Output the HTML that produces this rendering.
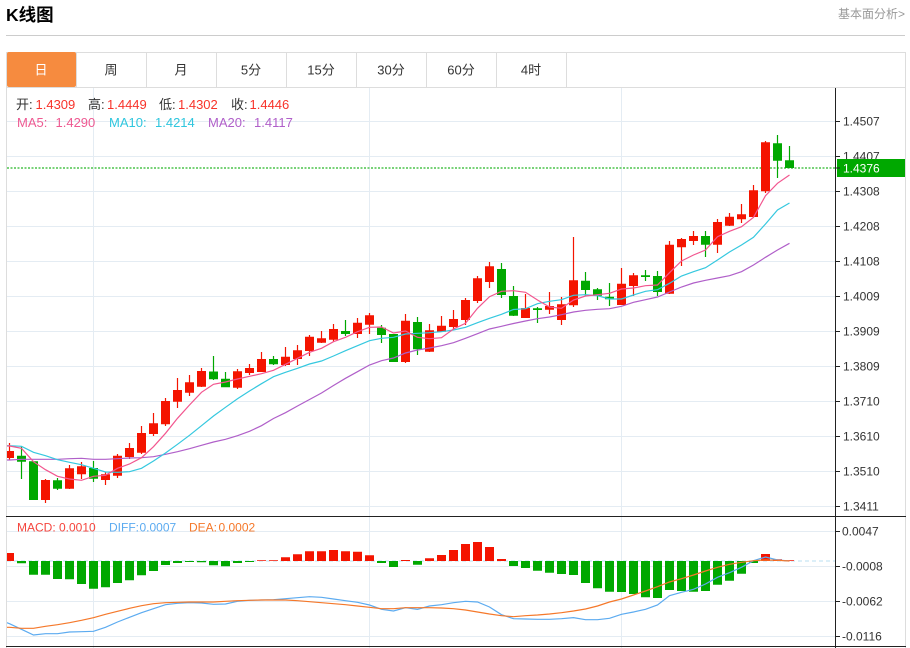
<!DOCTYPE html>
<html><head><meta charset="utf-8"><style>
html,body{margin:0;padding:0;background:#fff;width:910px;height:648px;overflow:hidden}
svg{position:absolute;left:0;top:0;display:block}
text{font-family:"Liberation Sans","Noto Sans CJK SC",sans-serif}
</style></head><body>
<svg width="910" height="648" viewBox="0 0 910 648" xmlns="http://www.w3.org/2000/svg">
<defs><clipPath id="c"><rect x="7" y="88" width="828" height="560"/></clipPath></defs>
<text x="6" y="21" font-size="17.500" font-weight="bold" fill="#000">K线图</text>
<text x="838" y="18" font-size="12" fill="#999" textLength="67">基本面分析&gt;</text>
<path d="M6 35.500H905" stroke="#ccc" fill="none"/>
<path d="M6.500 52V648M905.500 52V648M6 52.500H906M6 87.500H906" stroke="#ddd" fill="none"/>
<rect x="7" y="52" width="69" height="35" rx="2" fill="#f68b3f"/>
<path d="M76.500 52V87M146.500 52V87M216.500 52V87M286.500 52V87M356.500 52V87M426.500 52V87M496.500 52V87M566.500 52V87" stroke="#ddd" fill="none"/>
<g font-size="13" fill="#333" text-anchor="middle">
<text x="41" y="74.500" fill="#fff">日</text><text x="111" y="74.500">周</text><text x="181" y="74.500">月</text><text x="251" y="74.500">5分</text><text x="321" y="74.500">15分</text><text x="391" y="74.500">30分</text><text x="461" y="74.500">60分</text><text x="531" y="74.500">4时</text>
</g>
<path d="M7 121.500H835M7 156.500H835M7 191.500H835M7 226.500H835M7 261.500H835M7 296.500H835M7 331.500H835M7 366.500H835M7 401.500H835M7 436.500H835M7 471.500H835M7 506.500H835M7 531.500H835M7 566.500H835M7 601.500H835M7 636.500H835M93.500 88V648M369.500 88V648M621.500 88V648" stroke="#e4ecf3" fill="none"/>
<path d="M7 561H835" stroke="#b9dff2" stroke-dasharray="4 3" fill="none"/>
<path d="M7 168H835" stroke="#4cc44c" stroke-width="1.600" stroke-dasharray="2 1.500" fill="none"/>
<g clip-path="url(#c)">
<path fill="none" stroke="#f41400" stroke-width="1.200" d="M9.500 443V460M45.500 479V503M69.500 465V489M81.500 462V479M105.500 472V485M117.500 454V478M129.500 443V459M141.500 426V454M153.500 413V436M165.500 398V426M177.500 378V408M189.500 375V396M201.500 368V387M237.500 369V389M249.500 364V375M261.500 352V372M285.500 347V366M297.500 345V365M309.500 335V356M321.500 331V343M333.500 324V342M357.500 318V338M369.500 313V334M405.500 314V363M429.500 324V352M441.500 316V332M453.500 310V329M465.500 298V325M477.500 276V303M489.500 262V288M525.500 294V318M549.500 292V314M561.500 297V325M573.500 237V307M621.500 268V305M633.500 273V296M669.500 241V294M681.500 238V266M693.500 231V245M717.500 219V253M729.500 213V226M741.500 204V223M753.500 185V217M765.500 141V193"/>
<path fill="none" stroke="#00a800" stroke-width="1.200" d="M21.500 446V479M57.500 478V490M93.500 461V482M213.500 356V380M225.500 372V387M273.500 356V365M345.500 320V336M381.500 325V343M417.500 317V355M501.500 263V298M513.500 286V316M537.500 307V323M585.500 272V296M597.500 288V300M609.500 283V306M645.500 270V281M657.500 271V296M705.500 231V257M777.500 135V178M789.500 146V168"/>
<path fill="#f41400" d="M5 451h9v7h-9zM41 480h9v20h-9zM65 468.300h9v20.400h-9zM77 466.300h9v8h-9zM101 474.300h9v5.700h-9zM113 455.700h9v20h-9zM125 448h9v9h-9zM137 433h9v19.700h-9zM149 423.300h9v10.700h-9zM161 401h9v23.300h-9zM173 390h9v11.700h-9zM185 382.300h9v10.400h-9zM197 371h9v15.700h-9zM233 371.300h9v16.400h-9zM245 368h9v5h-9zM257 359h9v13h-9zM281 356.700h9v8.300h-9zM293 350.300h9v8.700h-9zM305 336.700h9v14.300h-9zM317 338.300h9v4.400h-9zM329 329h9v10.700h-9zM353 322.700h9v11.300h-9zM365 315.300h9v9.400h-9zM401 320.700h9v41.300h-9zM425 330.300h9v21.400h-9zM437 325.700h9v6h-9zM449 319h9v8h-9zM461 300h9v20h-9zM473 278.300h9v22.700h-9zM485 266.300h9v15.700h-9zM521 308h9v10h-9zM545 306h9v3.700h-9zM557 304.300h9v15.700h-9zM569 280.300h9v25h-9zM617 283.700h9v21.300h-9zM629 275.300h9v10.700h-9zM665 244.700h9v49h-9zM677 239h9v8.300h-9zM689 236h9v5h-9zM713 222h9v22.700h-9zM725 216.700h9v9h-9zM737 214.300h9v5h-9zM749 190.300h9v26.700h-9zM761 142.300h9v49h-9z"/>
<path fill="#00a800" d="M17 455.700h9v6h-9zM29 461.300h9v38.700h-9zM53 480.300h9v8.400h-9zM89 468h9v10.700h-9zM209 371.500h9v7.800h-9zM221 378.700h9v8.600h-9zM269 359h9v5.300h-9zM341 331h9v3h-9zM377 327.700h9v7.300h-9zM389 334h9v28h-9zM413 322h9v27.300h-9zM497 269h9v26h-9zM509 296h9v19.700h-9zM533 308.300h9v1.700h-9zM581 280.700h9v9.300h-9zM593 289.300h9v6.400h-9zM605 296.700h9v2.600h-9zM641 275.300h9v1.700h-9zM653 276h9v16h-9zM701 236h9v8.700h-9zM773 143.300h9v17.400h-9zM785 160.300h9v7.700h-9z"/>
<polyline fill="none" stroke="#b05fc9" stroke-width="1.200" points="5,460 9.500,460 21.500,459.300 33.500,459.300 45.500,459.300 57.500,459.300 69.500,458.700 81.500,458.300 93.500,459.300 105.500,459.300 117.500,458.700 129.500,458 141.500,457.700 153.500,456.700 165.500,454.300 177.500,451.700 189.500,448.700 201.500,445.300 213.500,442 225.500,439.300 237.500,435.700 249.500,431.300 261.500,425.700 273.500,418.500 285.500,412.700 297.500,406 309.500,399.500 321.500,393 333.500,385.500 345.500,378.300 357.500,371.700 369.500,365 381.500,360.700 393.500,358 405.500,353 417.500,350 429.500,348 441.500,345.700 453.500,342.700 465.500,338.300 477.500,333.700 489.500,329 501.500,326.300 513.500,323.500 525.500,321 537.500,318.700 549.500,317 561.500,314.700 573.500,312 585.500,310.300 597.500,309.300 609.500,308.700 621.500,306.300 633.500,302.300 645.500,299.700 657.500,297 669.500,292 681.500,287 693.500,283 705.500,280.300 717.500,278 729.500,275.700 741.500,271.700 753.500,265 765.500,257.300 777.500,250 789.500,243.300"/>
<polyline fill="none" stroke="#35c8df" stroke-width="1.200" points="5,445.700 9.500,445.700 21.500,446.300 33.500,452.300 45.500,455.700 57.500,459.700 69.500,462.300 81.500,464.700 93.500,468.300 105.500,472 117.500,472.300 129.500,471.700 141.500,468.300 153.500,461 165.500,453 177.500,444.300 189.500,435.300 201.500,425.700 213.500,416 225.500,407.300 237.500,398.700 249.500,391 261.500,383.700 273.500,376.700 285.500,372.300 297.500,368.300 309.500,364 321.500,361 333.500,356 345.500,350.700 357.500,345.700 369.500,340.700 381.500,338.300 393.500,337.300 405.500,334 417.500,333.300 429.500,332.700 441.500,331.700 453.500,330 465.500,327.300 477.500,322.700 489.500,318.300 501.500,314.300 513.500,309.500 525.500,308.700 537.500,303.700 549.500,301.300 561.500,299.700 573.500,295.300 585.500,294.700 597.500,295.700 609.500,299 621.500,299 633.500,295 645.500,291.300 657.500,289.700 669.500,283.300 681.500,276 693.500,271.700 705.500,267.700 717.500,260 729.500,252 741.500,245 753.500,237.300 765.500,224 777.500,210 789.500,203"/>
<polyline fill="none" stroke="#f2568f" stroke-width="1.200" points="5,446 9.500,446 21.500,448.300 33.500,461.700 45.500,469.700 57.500,476.300 69.500,479 81.500,480.300 93.500,476.300 105.500,475.300 117.500,468.300 129.500,464 141.500,457.700 153.500,446.700 165.500,433.300 177.500,418.300 189.500,405 201.500,392.300 213.500,384.300 225.500,382 237.500,379 249.500,376.300 261.500,373.700 273.500,370.300 285.500,364.300 297.500,358.300 309.500,352.300 321.500,348.300 333.500,341.700 345.500,337.300 357.500,331.700 369.500,327.300 381.500,327 393.500,333 405.500,331 417.500,337.300 429.500,338.700 441.500,337.700 453.500,329 465.500,323.300 477.500,308.300 489.500,296.700 501.500,291.300 513.500,290.700 525.500,292.300 537.500,300 549.500,307 561.500,308.300 573.500,300 585.500,296 597.500,294.700 609.500,293.300 621.500,289 633.500,288 645.500,285.700 657.500,285 669.500,272.700 681.500,261 693.500,255 705.500,250 717.500,236.700 729.500,231.300 741.500,226.700 753.500,217.300 765.500,195.700 777.500,183.300 789.500,175"/>
<path fill="#f41400" d="M5 553h9v8h-9zM257 560.300h9v.7h-9zM269 560.300h9v.7h-9zM281 557.300h9v3.700h-9zM293 554.300h9v6.700h-9zM305 551.300h9v9.700h-9zM317 551.300h9v9.700h-9zM329 550h9v11h-9zM341 551.300h9v9.700h-9zM353 551.700h9v9.300h-9zM365 555.300h9v5.700h-9zM401 560h9v1h-9zM425 558.300h9v2.700h-9zM437 555h9v6h-9zM449 550h9v11h-9zM461 544h9v17h-9zM473 542h9v19h-9zM485 547h9v14h-9zM497 559h9v2h-9zM761 554h9v7h-9zM773 559.300h9v1.700h-9zM785 560.300h9v.7h-9z"/>
<path fill="#00a800" d="M17 561h9v2.300h-9zM29 561h9v13.700h-9zM41 561h9v13.700h-9zM53 561h9v18h-9zM65 561h9v18.300h-9zM77 561h9v23h-9zM89 561h9v27.700h-9zM101 561h9v26.300h-9zM113 561h9v22h-9zM125 561h9v19.300h-9zM137 561h9v14.300h-9zM149 561h9v10h-9zM161 561h9v4h-9zM173 561h9v2h-9zM185 561h9v1h-9zM197 561h9v1.300h-9zM209 561h9v4.300h-9zM221 561h9v5.300h-9zM233 561h9v2h-9zM245 561h9v1h-9zM377 561h9v2h-9zM389 561h9v6h-9zM413 561h9v3.700h-9zM509 561h9v5h-9zM521 561h9v7h-9zM533 561h9v9.700h-9zM545 561h9v11.700h-9zM557 561h9v13h-9zM569 561h9v14h-9zM581 561h9v22h-9zM593 561h9v27.300h-9zM605 561h9v30.700h-9zM617 561h9v31h-9zM629 561h9v33h-9zM641 561h9v36.300h-9zM653 561h9v37h-9zM665 561h9v29h-9zM677 561h9v30h-9zM689 561h9v30.700h-9zM701 561h9v30h-9zM713 561h9v23.700h-9zM725 561h9v19.700h-9zM737 561h9v12.700h-9zM749 561h9v2h-9z"/>
<g transform="translate(0 510) scale(.33333)" fill="none" stroke-width="3.600">
<polyline stroke="#5cabf0" points="20,338 28.500,341 64.500,358 100.500,375 136.500,371 172.500,371 208.500,366 244.500,365 280.500,364 316.500,352 352.500,336 388.500,322 424.500,308 460.500,296 496.500,284 532.500,280 568.500,278 604.500,279 640.500,283 676.500,282 712.500,274 748.500,271 784.500,270 820.500,269 856.500,266 892.500,263 928.500,260 964.500,262 1000.500,267 1036.500,272 1072.500,277 1108.500,285 1144.500,298 1180.500,303 1216.500,293 1252.500,298 1288.500,288 1324.500,284 1360.500,278 1396.500,274 1432.500,276 1468.500,291 1504.500,314 1540.500,326 1576.500,327 1612.500,328 1648.500,328 1684.500,326 1720.500,323 1756.500,329 1792.500,329 1828.500,325 1864.500,313 1900.500,306 1936.500,298 1972.500,285 2008.500,257 2044.500,247 2080.500,238 2116.500,222 2152.500,202 2188.500,188 2224.500,172 2260.500,152 2296.500,141 2332.500,150 2368.500,153"/>
<polyline stroke="#f5782a" points="20,352 28.500,352 64.500,355 100.500,355 136.500,349 172.500,344 208.500,338 244.500,331 280.500,323 316.500,313 352.500,304 388.500,295 424.500,287 460.500,281 496.500,278 532.500,277 568.500,276 604.500,276 640.500,276 676.500,274 712.500,272 748.500,271 784.500,270 820.500,270 856.500,270 892.500,272 928.500,275 964.500,278 1000.500,281 1036.500,284 1072.500,288 1108.500,292 1144.500,296 1180.500,296 1216.500,293 1252.500,293 1288.500,293 1324.500,294 1360.500,296 1396.500,300 1432.500,306 1468.500,312 1504.500,317 1540.500,320 1576.500,317 1612.500,315 1648.500,312 1684.500,308 1720.500,303 1756.500,297 1792.500,288 1828.500,276 1864.500,267 1900.500,255 1936.500,243 1972.500,230 2008.500,216 2044.500,206 2080.500,195 2116.500,183 2152.500,172 2188.500,163 2224.500,157 2260.500,152 2296.500,150 2332.500,151 2368.500,153"/>
</g>
</g>
<path d="M6 516.500H906M6 646.500H906M835.500 88V648" stroke="#222" fill="none"/>
<path d="M835 121.500h5M835 156.500h5M835 191.500h5M835 226.500h5M835 261.500h5M835 296.500h5M835 331.500h5M835 366.500h5M835 401.500h5M835 436.500h5M835 471.500h5M835 506.500h5M835 531.500h5M835 566.500h5M835 601.500h5M835 636.500h5" stroke="#222" fill="none"/>
<g font-size="12" fill="#333">
<text x="843" y="125.500">1.4507</text><text x="843" y="160.500">1.4407</text><text x="843" y="195.500">1.4308</text><text x="843" y="230.500">1.4208</text><text x="843" y="265.500">1.4108</text><text x="843" y="300.500">1.4009</text><text x="843" y="335.500">1.3909</text><text x="843" y="370.500">1.3809</text><text x="843" y="405.500">1.3710</text><text x="843" y="440.500">1.3610</text><text x="843" y="475.500">1.3510</text><text x="843" y="510.500">1.3411</text>
<text x="842" y="535.500">0.0047</text><text x="842" y="570.500">-0.0008</text><text x="842" y="605.500">-0.0062</text><text x="842" y="640.500">-0.0116</text>
</g>
<rect x="837" y="159" width="68" height="18" fill="#00a800"/>
<path d="M835 168h5" stroke="#222" fill="none"/>
<text x="843" y="172.500" font-size="12" fill="#fff">1.4376</text>
<g font-size="13">
<g fill="#333"><text x="16" y="109">开:</text><text x="88" y="109">高:</text><text x="159" y="109">低:</text><text x="231" y="109">收:</text></g>
<g fill="#f8332a"><text x="35.500" y="109">1.4309</text><text x="107" y="109">1.4449</text><text x="178" y="109">1.4302</text><text x="249.500" y="109">1.4446</text></g>
<g fill="#ee5a92"><text x="17" y="127">MA5:</text><text x="55.500" y="127">1.4290</text></g>
<g fill="#2fc6de"><text x="109" y="127">MA10:</text><text x="155" y="127">1.4214</text></g>
<g fill="#b05fc9"><text x="208" y="127">MA20:</text><text x="254" y="127">1.4117</text></g>
</g>
<g font-size="12">
<g fill="#f5453d"><text x="17" y="531.500">MACD:</text><text x="59" y="531.500">0.0010</text></g>
<g fill="#5cabf0"><text x="109" y="531.500">DIFF:</text><text x="139.500" y="531.500">0.0007</text></g>
<g fill="#f5782a"><text x="189" y="531.500">DEA:</text><text x="218.500" y="531.500">0.0002</text></g>
</g>
</svg>
</body></html>
